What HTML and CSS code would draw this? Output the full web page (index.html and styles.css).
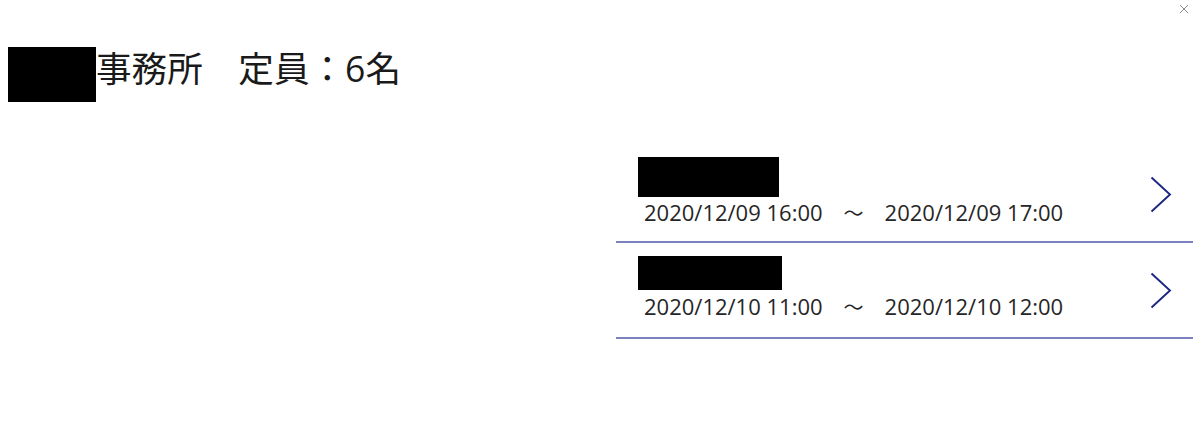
FILE: index.html
```html
<!DOCTYPE html>
<html lang="ja">
<head>
<meta charset="utf-8">
<title>事務所</title>
<link rel="stylesheet" href="styles.css">
</head>
<body>
<button class="close" aria-label="閉じる">
  <svg width="10" height="10" viewBox="0 0 10 10"><path d="M1 1 L9 9 M9 1 L1 9" stroke="#8a8a8a" stroke-width="1" fill="none"/></svg>
</button>
<header class="header">
  <span class="redact title-redact"></span>
  <h1 class="title">事務所　定員：6名</h1>
</header>
<main class="content">
  <ul class="list">
    <li class="row">
      <div class="info">
        <span class="redact name-redact name-a"></span>
        <div class="time">2020/12/09 16:00<span class="sep">～</span>2020/12/09 17:00</div>
      </div>
      <svg class="chev" width="22" height="38" viewBox="0 0 22 38"><path d="M1.5 1.5 L20 18.5 L1.5 35.5" stroke="#1b2680" stroke-width="1.9" fill="none"/></svg>
    </li>
    <li class="row">
      <div class="info">
        <span class="redact name-redact name-b"></span>
        <div class="time">2020/12/10 11:00<span class="sep">～</span>2020/12/10 12:00</div>
      </div>
      <svg class="chev" width="22" height="38" viewBox="0 0 22 38"><path d="M1.5 1.5 L20 18.5 L1.5 35.5" stroke="#1b2680" stroke-width="1.9" fill="none"/></svg>
    </li>
  </ul>
</main>
</body>
</html>
```

FILE: styles.css
```css
html, body {
  margin: 0;
  padding: 0;
  background: #ffffff;
}
body {
  width: 1200px;
  height: 448px;
  overflow: hidden;
  position: relative;
  font-family: "Open Sans", "Noto Sans CJK JP", sans-serif;
  color: #222222;
}
.close {
  position: absolute;
  top: 4px;
  right: 11px;
  width: 10px;
  height: 10px;
  padding: 0;
  border: 0;
  background: transparent;
  display: flex;
}
.header {
  display: flex;
  align-items: flex-start;
  padding: 47px 0 0 8px;
}
.redact {
  display: block;
  background: #000000;
}
.title-redact {
  width: 88px;
  height: 55px;
}
.title {
  margin: 4px 0 0 0;
  font-family: "Open Sans", "Noto Sans CJK JP", sans-serif;
  font-weight: 400;
  font-size: 35.6px;
  line-height: 35px;
  color: #1a1a1a;
}
.content {
  display: flex;
  justify-content: flex-end;
  padding: 44px 7px 0 0;
}
.list {
  list-style: none;
  margin: 0;
  padding: 0;
  width: 577px;
}
.row {
  display: flex;
  align-items: center;
  justify-content: space-between;
  height: 95px;
  border-bottom: 2px solid #7a83bd;
  box-sizing: content-box;
  padding: 0 21px 0 22px;
}
.row + .row {
  height: 94px;
}
.info {
  display: flex;
  flex-direction: column;
  align-self: flex-start;
}
.name-a {
  width: 141px;
  height: 40px;
  margin-top: 11px;
}
.name-b {
  width: 144px;
  height: 34px;
  margin-top: 13px;
}
.time {
  margin: 1px 0 0 6px;
  font-size: 22px;
  line-height: 28px;
  color: #262626;
  white-space: nowrap;
}
.name-b + .time {
  margin-top: 2px;
}
.sep {
  font-family: "Noto Sans CJK JP", sans-serif;
  margin: 0 21px;
  font-size: 20px;
}
.chev {
  display: block;
  margin-top: 2px;
}
```
